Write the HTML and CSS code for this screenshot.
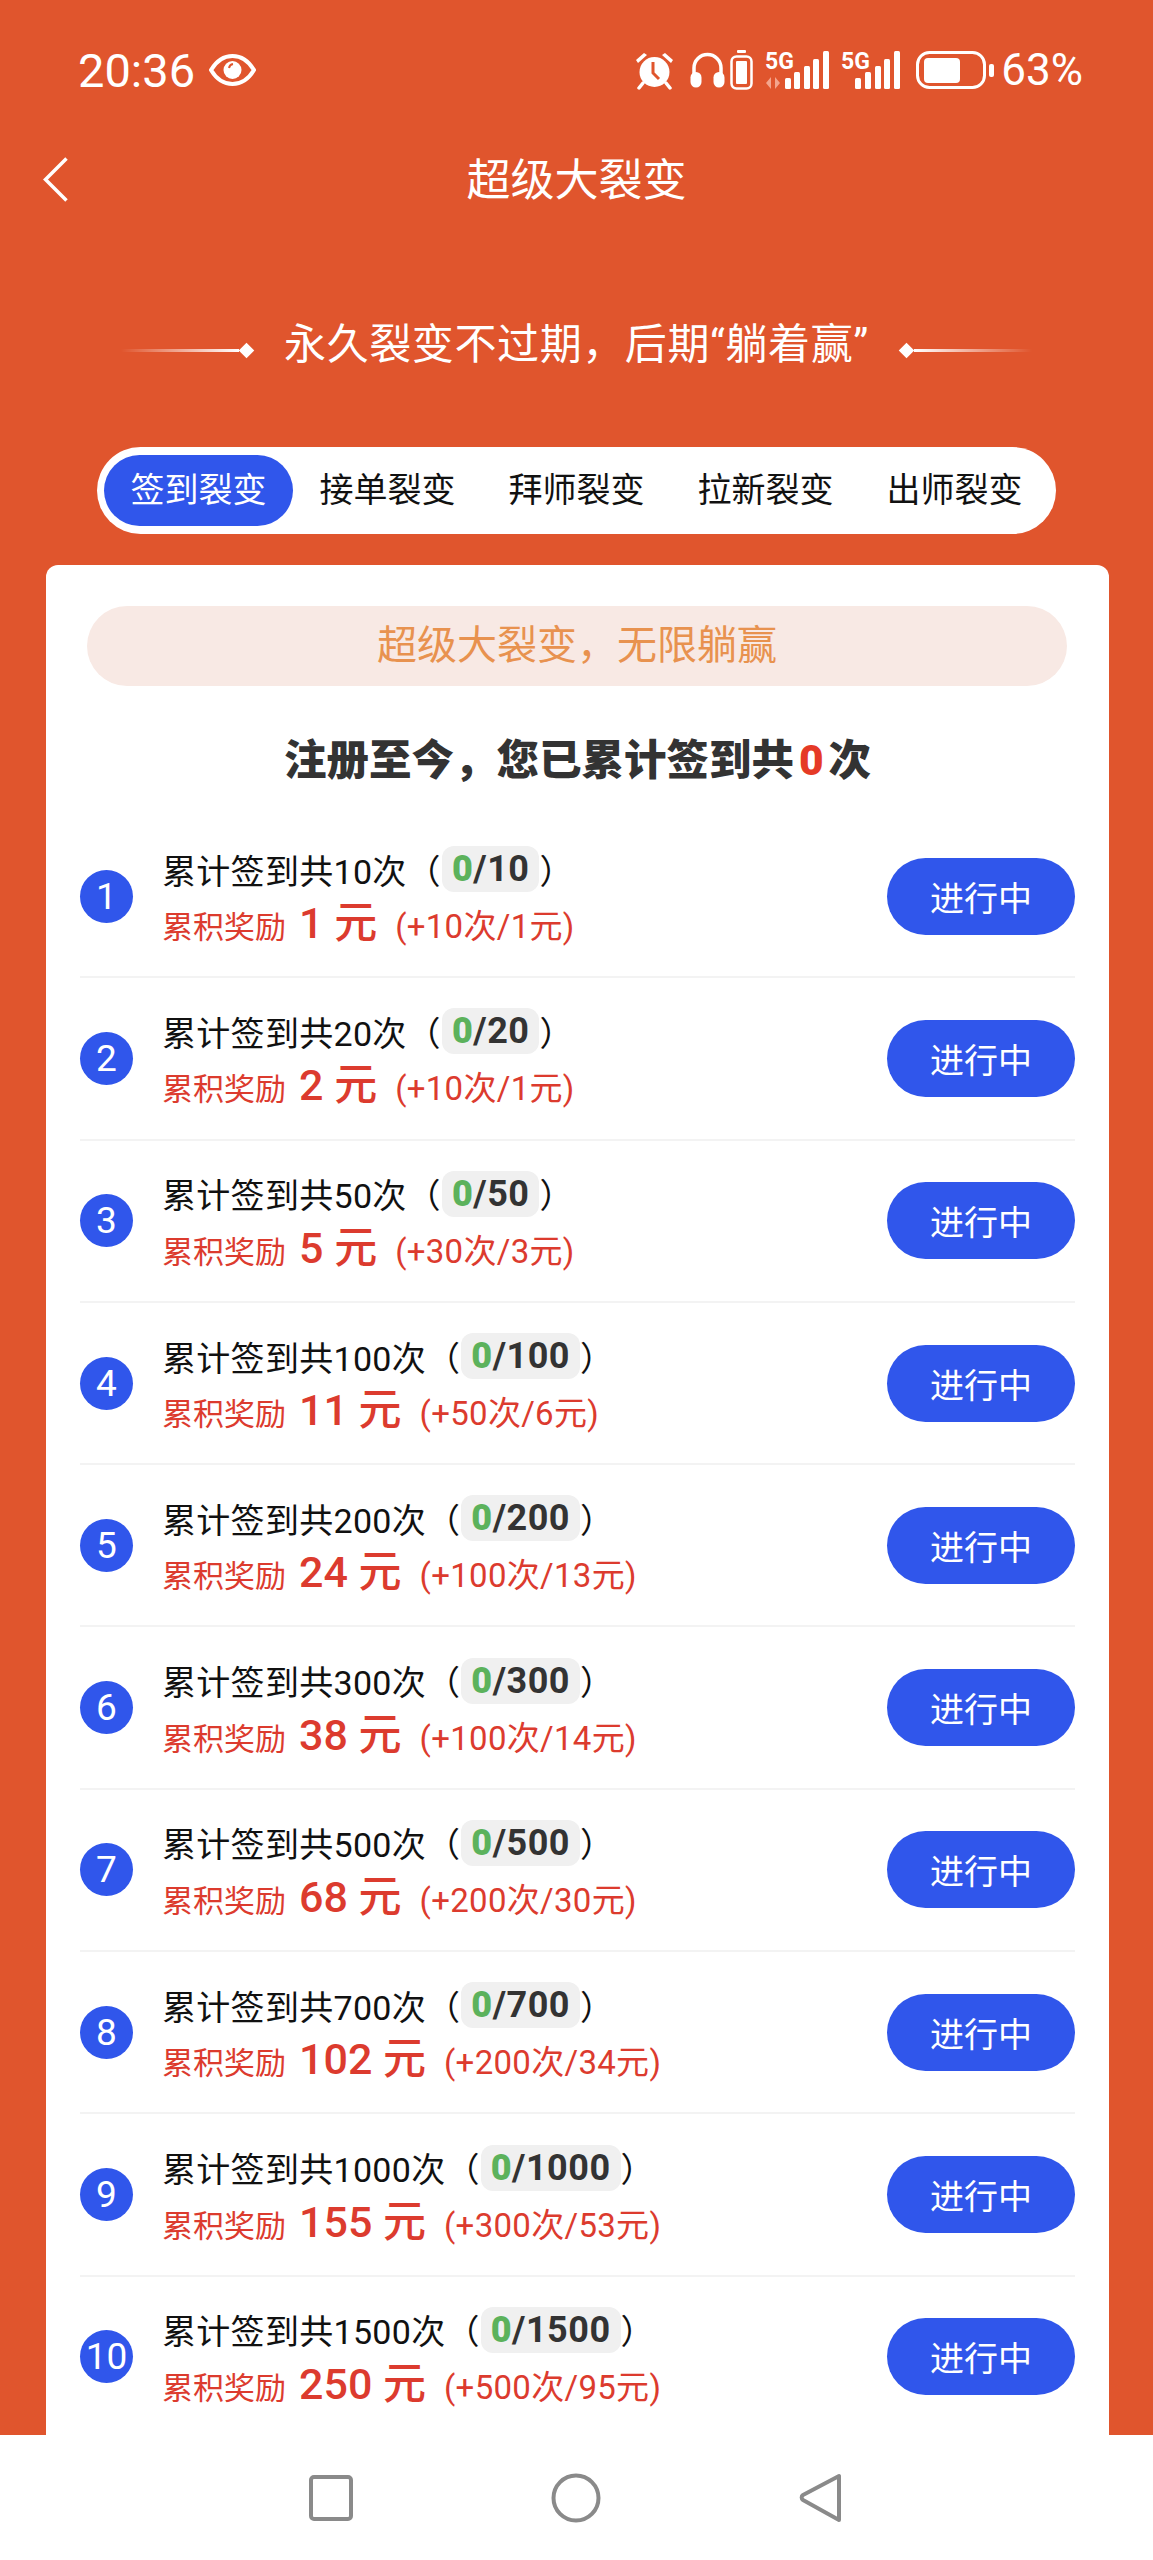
FILE: index.html
```html
<!DOCTYPE html>
<html lang="zh-CN"><head>
    <meta charset="UTF-8">
    <meta name="viewport" content="width=device-width, initial-scale=1.0">
    <title>超级大裂变</title>
    <link rel="stylesheet" href="styles.css">
</head>

<body>
    <div class="screen">
        <main class="page">
            <!-- 状态栏 -->
            <div class="status-bar">
                <div class="status-left">
                    <span class="status-time">20:36</span>
                    <svg class="icon-eye" viewBox="0 0 47 32"><path d="M2 16C8 6 15 2 23.500 2S39 6 45 16c-6 10-13.500 14-21.500 14S8 26 2 16z" fill="none" stroke="#fff" stroke-width="4"/><circle cx="23.500" cy="16" r="9" fill="#fff"/><path d="M20 14a5 5 0 0 1 4-4" fill="none" stroke="#e0552d" stroke-width="2"/></svg>
                </div>
                <div class="status-right">
                    <svg class="icon-alarm" viewBox="0 0 39 39"><path d="M1 9l8-7 3 2-9 8zM38 9l-8-7-3 2 9 8z" fill="#fff"/><circle cx="19.5" cy="21" r="15" fill="#fff"/><path d="M18 11v11l6 6" fill="none" stroke="#e0552d" stroke-width="3"/><path d="M8 32l-4 5M31 32l4 5" stroke="#fff" stroke-width="3.5" stroke-linecap="round"/></svg>
                    <svg class="icon-phones" viewBox="0 0 35 36"><path d="M4 24v-8a13.500 13.500 0 0 1 27 0v8" fill="none" stroke="#fff" stroke-width="3.500"/><rect x="0.500" y="20" width="11" height="15.500" rx="5.500" fill="#fff"/><rect x="23.500" y="20" width="11" height="15.500" rx="5.500" fill="#fff"/></svg>
                    <svg class="icon-cell" viewBox="0 0 23 40"><rect x="7" y="0" width="9" height="3" rx="1" fill="#fff"/><rect x="1.500" y="6.500" width="20" height="32" rx="5" fill="none" stroke="#fff" stroke-width="2.500"/><rect x="6" y="11" width="11" height="23" rx="1" fill="#fff"/></svg>
                    <svg class="icon-net" viewBox="0 -5 64 50"><text class="net-label" x="0" y="19">5G</text><path d="M6 27v12l-5-6zM10 39V27l5 6z" fill="#f4a58d"/><rect x="20" y="28" width="6" height="11" rx="1.500" fill="#fff"/><rect x="29" y="22" width="6" height="17" rx="1.500" fill="#fff"/><rect x="39" y="16" width="6" height="23" rx="1.500" fill="#fff"/><rect x="48" y="9" width="6" height="30" rx="1.500" fill="#fff"/><rect x="58" y="1" width="6" height="38" rx="1.500" fill="#fff"/></svg>
                    <svg class="icon-net2" viewBox="0 -5 59 50"><text class="net-label" x="0" y="19">5G</text><rect x="14" y="28" width="6" height="11" rx="1.500" fill="#fff"/><rect x="24" y="22" width="6" height="17" rx="1.500" fill="#fff"/><rect x="34" y="16" width="6" height="23" rx="1.500" fill="#fff"/><rect x="43" y="9" width="6" height="30" rx="1.500" fill="#fff"/><rect x="53" y="1" width="6" height="38" rx="1.500" fill="#fff"/></svg>
                    <svg class="icon-battery" viewBox="0 0 78 38"><rect x="1.500" y="1.500" width="67" height="35" rx="12" fill="none" stroke="#fff" stroke-width="3"/><rect x="8" y="7" width="36" height="25" rx="4" fill="#fff"/><rect x="73" y="13" width="5" height="13" rx="2" fill="#fff"/></svg>
                    <span class="status-percent">63%</span>
                </div>
            </div>

            <!-- 标题栏 -->
            <header class="nav-bar">
                <svg class="back-icon" viewBox="0 0 25 45"><path d="M23.500 1.500L2.500 22.500l21 21" fill="none" stroke="#fff" stroke-width="3.500"/></svg>
                <div class="nav-title">超级大裂变</div>
            </header>

            <div class="slogan">
                <span class="slogan-line"></span>
                <span class="slogan-dot"></span>
                <span class="slogan-text">永久裂变不过期，后期“躺着赢”</span>
                <span class="slogan-dot"></span>
                <span class="slogan-line slogan-line-right"></span>
            </div>

            <div class="tabs">
                <a class="tab tab-active">签到裂变</a>
                <a class="tab">接单裂变</a>
                <a class="tab">拜师裂变</a>
                <a class="tab">拉新裂变</a>
                <a class="tab">出师裂变</a>
            </div>

            <section class="card">
                <div class="banner">超级大裂变，无限躺赢</div>
                <h2 class="summary">注册至今，您已累计签到共<span class="summary-count">0</span>次</h2>

                <ul class="task-list">
                    <li class="task">
                        <span class="task-num">1</span>
                        <div class="task-text">
                            <div class="task-title">累计签到共10次（<span class="task-progress"><b>0</b>/10</span>）</div>
                            <div class="task-reward">累积奖励<span class="task-amount">1 元</span><span class="task-extra">(+10次/1元)</span></div>
                        </div>
                        <button class="task-btn">进行中</button>
                    </li>
                    <li class="task">
                        <span class="task-num">2</span>
                        <div class="task-text">
                            <div class="task-title">累计签到共20次（<span class="task-progress"><b>0</b>/20</span>）</div>
                            <div class="task-reward">累积奖励<span class="task-amount">2 元</span><span class="task-extra">(+10次/1元)</span></div>
                        </div>
                        <button class="task-btn">进行中</button>
                    </li>
                    <li class="task">
                        <span class="task-num">3</span>
                        <div class="task-text">
                            <div class="task-title">累计签到共50次（<span class="task-progress"><b>0</b>/50</span>）</div>
                            <div class="task-reward">累积奖励<span class="task-amount">5 元</span><span class="task-extra">(+30次/3元)</span></div>
                        </div>
                        <button class="task-btn">进行中</button>
                    </li>
                    <li class="task">
                        <span class="task-num">4</span>
                        <div class="task-text">
                            <div class="task-title">累计签到共100次（<span class="task-progress"><b>0</b>/100</span>）</div>
                            <div class="task-reward">累积奖励<span class="task-amount">11 元</span><span class="task-extra">(+50次/6元)</span></div>
                        </div>
                        <button class="task-btn">进行中</button>
                    </li>
                    <li class="task">
                        <span class="task-num">5</span>
                        <div class="task-text">
                            <div class="task-title">累计签到共200次（<span class="task-progress"><b>0</b>/200</span>）</div>
                            <div class="task-reward">累积奖励<span class="task-amount">24 元</span><span class="task-extra">(+100次/13元)</span></div>
                        </div>
                        <button class="task-btn">进行中</button>
                    </li>
                    <li class="task">
                        <span class="task-num">6</span>
                        <div class="task-text">
                            <div class="task-title">累计签到共300次（<span class="task-progress"><b>0</b>/300</span>）</div>
                            <div class="task-reward">累积奖励<span class="task-amount">38 元</span><span class="task-extra">(+100次/14元)</span></div>
                        </div>
                        <button class="task-btn">进行中</button>
                    </li>
                    <li class="task">
                        <span class="task-num">7</span>
                        <div class="task-text">
                            <div class="task-title">累计签到共500次（<span class="task-progress"><b>0</b>/500</span>）</div>
                            <div class="task-reward">累积奖励<span class="task-amount">68 元</span><span class="task-extra">(+200次/30元)</span></div>
                        </div>
                        <button class="task-btn">进行中</button>
                    </li>
                    <li class="task">
                        <span class="task-num">8</span>
                        <div class="task-text">
                            <div class="task-title">累计签到共700次（<span class="task-progress"><b>0</b>/700</span>）</div>
                            <div class="task-reward">累积奖励<span class="task-amount">102 元</span><span class="task-extra">(+200次/34元)</span></div>
                        </div>
                        <button class="task-btn">进行中</button>
                    </li>
                    <li class="task">
                        <span class="task-num">9</span>
                        <div class="task-text">
                            <div class="task-title">累计签到共1000次（<span class="task-progress"><b>0</b>/1000</span>）</div>
                            <div class="task-reward">累积奖励<span class="task-amount">155 元</span><span class="task-extra">(+300次/53元)</span></div>
                        </div>
                        <button class="task-btn">进行中</button>
                    </li>
                    <li class="task">
                        <span class="task-num">10</span>
                        <div class="task-text">
                            <div class="task-title">累计签到共1500次（<span class="task-progress"><b>0</b>/1500</span>）</div>
                            <div class="task-reward">累积奖励<span class="task-amount">250 元</span><span class="task-extra">(+500次/95元)</span></div>
                        </div>
                        <button class="task-btn">进行中</button>
                    </li>
                </ul>
            </section>
        </main>

        <!-- 系统导航 -->
        <footer class="sys-nav">
            <svg class="sys-icon" viewBox="0 0 50 50"><rect x="5" y="4" width="40" height="42" rx="3" fill="none" stroke="#8a8a8a" stroke-width="4"/></svg>
            <svg class="sys-icon" viewBox="0 0 50 50"><circle cx="25" cy="25" r="22.500" fill="none" stroke="#8a8a8a" stroke-width="4"/></svg>
            <svg class="sys-icon" viewBox="0 0 50 50"><path d="M43 3v44L7 27a3 3 0 0 1 0-5z" fill="none" stroke="#8a8a8a" stroke-width="4" stroke-linejoin="round"/></svg>
        </footer>
    </div>
</body></html>
```

FILE: styles.css
```css
body {
    font-family: Roboto, 'Noto Sans CJK SC', sans-serif;
    margin: 0;
    padding: 0;
    background-color: #fff;
}

.screen {
    height: 2560px;
    display: flex;
    flex-direction: column;
    overflow: hidden;
}

.page {
    flex: 1;
    min-height: 0;
    overflow: hidden;
    background-color: #e0552d;
    color: #fff;
}

/* 状态栏 */
.status-bar {
    height: 80px;
    padding: 30px 70px 0 78px;
    display: flex;
    justify-content: space-between;
    align-items: center;
}

.status-left,
.status-right {
    display: flex;
    align-items: center;
}

.status-time {
    font-size: 47px;
    line-height: 47px;
    width: 131px;
}

.icon-eye {
    width: 47px;
    height: 32px;
}

.icon-alarm {
    width: 39px;
    height: 39px;
    margin-right: 16px;
}

.icon-phones {
    width: 35px;
    height: 36px;
    margin-right: 5px;
}

.icon-cell {
    width: 23px;
    height: 40px;
    margin-right: 12px;
}

.icon-net {
    width: 64px;
    height: 50px;
    margin-right: 12px;
}

.icon-net2 {
    width: 59px;
    height: 50px;
    margin-right: 16px;
}

.net-label {
    font-size: 23px;
    font-weight: 700;
    fill: #fff;
}

.icon-battery {
    width: 78px;
    height: 38px;
    margin-right: 7px;
}

.status-percent {
    font-size: 44px;
    line-height: 46px;
}

/* 标题栏 */
.nav-bar {
    position: relative;
    height: 80px;
    margin-top: 28px;
    display: flex;
    justify-content: center;
    align-items: center;
}

.back-icon {
    position: absolute;
    left: 43px;
    top: 19px;
    width: 25px;
    height: 45px;
}

.nav-title {
    padding-bottom: 2px;
    font-size: 44px;
}

.slogan {
    height: 60px;
    margin-top: 92px;
    display: flex;
    justify-content: center;
    align-items: center;
}

.slogan-text {
    font-size: 42px;
    letter-spacing: 0.6px;
    margin: 0 30px;
}

.slogan-line {
    width: 118px;
    height: 3px;
    margin-top: 20px;
    background: linear-gradient(to right, rgba(255, 255, 255, 0), #fff);
}

.slogan-line-right {
    background: linear-gradient(to left, rgba(255, 255, 255, 0), #fff);
}

.slogan-dot {
    width: 11px;
    height: 11px;
    margin: 20px 2px 0;
    background-color: #fff;
    transform: rotate(45deg);
}

.tabs {
    width: 959px;
    height: 87px;
    margin: 77px 0 0 97px;
    padding: 8px 7px;
    box-sizing: border-box;
    display: flex;
    background-color: #fff;
    border-radius: 44px;
}

.tab {
    width: 190px;
    height: 71px;
    line-height: 71px;
    text-align: center;
    font-size: 34px;
    color: #111;
    border-radius: 36px;
}

.tab-active {
    background-color: #3056eb;
    color: #fff;
}

/* 卡片 */
.card {
    margin: 31px 44px 0 46px;
    padding: 41px 34px 0;
    background-color: #fff;
    border-radius: 12px 12px 0 0;
}

.banner {
    height: 80px;
    line-height: 80px;
    margin-right: 8px;
    margin-left: 7px;
    text-align: center;
    font-size: 40px;
    color: #e8924f;
    background-color: #f8e9e4;
    border-radius: 40px;
}

.summary {
    height: 60px;
    margin: 45px 0 0;
    line-height: 60px;
    text-align: center;
    font-size: 42.5px;
    font-weight: 900;
    color: #333;
}

.summary-count {
    margin: 0 5px;
    color: #e53a26;
}

.task-list {
    list-style: none;
    margin: 25px 0 0;
    padding: 0;
}

.task {
    height: 160.3px;
    display: flex;
    align-items: center;
    border-bottom: 2px solid #f3f3f3;
}

.task-num {
    width: 53px;
    height: 53px;
    margin-right: 29px;
    line-height: 53px;
    text-align: center;
    font-size: 37px;
    color: #fff;
    background-color: #3056eb;
    border-radius: 50%;
    flex-shrink: 0;
}

.task-text {
    flex: 1;
}

.task-title {
    height: 54px;
    display: flex;
    align-items: center;
    font-size: 34px;
    letter-spacing: 0.3px;
    color: #111;
}

.task-progress {
    height: 46px;
    line-height: 46px;
    margin-left: 1px;
    padding: 0 10px;
    font-size: 36px;
    font-weight: 700;
    letter-spacing: 0.5px;
    color: #333;
    background-color: #f0f0f0;
    border-radius: 12px;
}

.task-progress b {
    color: #5cb25c;
}

.task-reward {
    height: 54px;
    line-height: 54px;
    font-size: 31px;
    color: #dc3b2e;
}

.task-amount {
    margin: 0 18px 0 13px;
    font-size: 43px;
    font-weight: 500;
}

.task-extra {
    font-size: 33px;
    letter-spacing: 0.3px;
}

.task-btn {
    width: 188px;
    height: 77px;
    padding: 0;
    border: none;
    border-radius: 39px;
    font-family: inherit;
    font-size: 34px;
    color: #fff;
    background-color: #3056eb;
}

/* 系统导航 */
.sys-nav {
    height: 125px;
    padding-right: 2px;
    display: flex;
    justify-content: center;
    align-items: center;
    gap: 195px;
    background-color: #fff;
}

.sys-icon {
    width: 50px;
    height: 50px;
}
```
